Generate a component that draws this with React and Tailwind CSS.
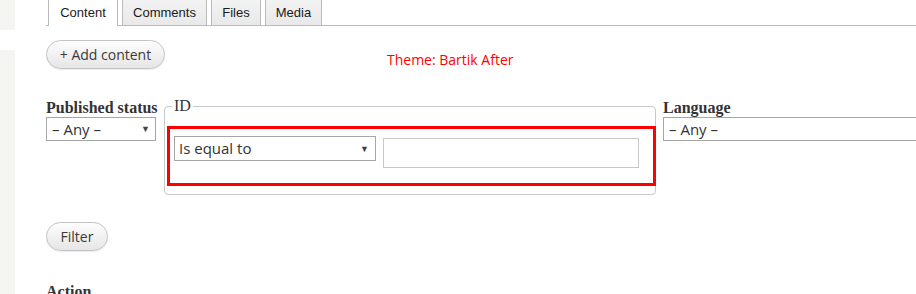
export default function App() {
  const tabs = ['Content', 'Comments', 'Files', 'Media'];
  const sans = { fontFamily: '"Open Sans", "Liberation Sans", sans-serif' };

  return (
    <div className="flex h-[294px] w-[916px] overflow-hidden bg-white">
      {/* left gutter */}
      <div className="flex w-[15px] shrink-0 flex-col">
        <div className="h-[30px] bg-[#f5f5f2]" />
        <div className="h-[20px] bg-white" />
        <div className="flex-1 bg-[#f5f5f2]" />
      </div>

      <div className="flex-1 pl-[31px]">
        {/* tabs */}
        <div className="-mt-[6px] flex h-[32px] items-end border-b border-[#bbb] pl-[2px] font-['Liberation_Sans',Arial,sans-serif] text-[13px] text-[#1a1a1a]">
          <div className="-mb-px flex h-[32px] w-[70px] items-center justify-center rounded-t-[4px] border border-b-0 border-[#bbb] bg-white pt-[5px]">
            Content
          </div>
          {tabs.slice(1).map((t, i) => (
            <div
              key={t}
              className={`ml-[4px] flex h-[31px] items-center justify-center rounded-t-[4px] border border-b-0 border-[#bbb] bg-gradient-to-b from-[#f4f4f4] to-[#e9e9e9] pt-[5px] ${
                i === 0 ? 'w-[85px]' : i === 1 ? 'w-[50px]' : 'w-[57px]'
              }`}
            >
              {t}
            </div>
          ))}
        </div>

        {/* add content + annotation */}
        <div className="mt-[14px] flex items-start">
          <button
            style={sans}
            className="flex h-[29px] w-[119px] items-center justify-center rounded-[15px] border border-[#c4c4c4] bg-gradient-to-b from-[#fdfdfd] to-[#e6e6e6] text-[14px] text-[#3a3a3a] shadow-[0_1px_1px_rgba(0,0,0,0.08)]"
          >
            + Add content
          </button>
          <span
            style={{ fontFamily: '"Open Sans", "DejaVu Sans", sans-serif' }}
            className="ml-[222px] mt-[10px] text-[14px] leading-[19px] text-[#f00]"
          >
            Theme: Bartik After
          </span>
        </div>

        {/* exposed filters */}
        <div className="mt-[29px] flex items-start">
          <div className="w-[110px] shrink-0">
            <div className="h-[19px] whitespace-nowrap font-['Liberation_Serif',Georgia,serif] text-[16px] font-bold leading-[19px] text-[#333]">
              Published status
            </div>
            <div
              style={sans}
              className="flex h-[24px] items-center justify-between border border-[#a6a6a6] pl-[5px] pr-[5px] text-[15px] text-[#333]"
            >
              <span>– Any –</span>
              <span className="text-[9px] text-[#444]">▼</span>
            </div>
          </div>

          <fieldset className="ml-[8px] mt-[-1px] w-[492px] shrink-0 rounded-[4px] border border-[#c8c8c8] pb-[8px]">
            <legend className="ml-[7px] px-[2px] font-['Liberation_Serif',Georgia,serif] text-[16px] leading-[18px] text-[#333]">
              ID
            </legend>
            <div className="ml-[2px] mr-[-1px] mt-[11px] flex h-[60px] items-start border-[3px] border-[#f00] pl-[4px] pt-[7px]">
              <div
                style={sans}
                className="flex h-[25px] w-[202px] items-center justify-between border border-[#a6a6a6] pl-[4px] pr-[6px] text-[15px] text-[#333]"
              >
                <span>Is equal to</span>
                <span className="text-[9px] text-[#444]">▼</span>
              </div>
              <input
                type="text"
                className="ml-[7px] mt-[2px] h-[30px] w-[256px] border border-[#c8c8c8] bg-white outline-none"
              />
            </div>
          </fieldset>

          <div className="ml-[7px] flex-1">
            <div className="h-[19px] font-['Liberation_Serif',Georgia,serif] text-[16px] font-bold leading-[19px] text-[#333]">
              Language
            </div>
            <div
              style={sans}
              className="flex h-[24px] w-[300px] items-center border border-[#a6a6a6] pl-[5px] text-[15px] text-[#333]"
            >
              – Any –
            </div>
          </div>
        </div>

        <button
          style={sans}
          className="mt-[27px] flex h-[29px] w-[62px] items-center justify-center rounded-[15px] border border-[#c4c4c4] bg-gradient-to-b from-[#fdfdfd] to-[#e6e6e6] text-[14px] text-[#3a3a3a] shadow-[0_1px_1px_rgba(0,0,0,0.08)]"
        >
          Filter
        </button>

        <div className="mt-[31px] font-['Liberation_Serif',Georgia,serif] text-[16px] font-bold leading-[19px] text-[#333]">
          Action
        </div>
      </div>
    </div>
  );
}
